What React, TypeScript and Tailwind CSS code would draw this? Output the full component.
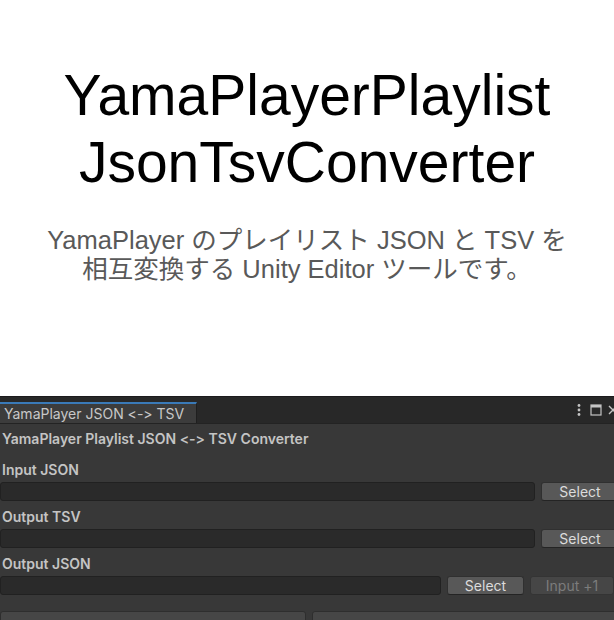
export default function App() {
  const field = "h-[19px] rounded-[3px] bg-[#2a2a2a] border border-[#212121]";
  const btn =
    "h-[19px] rounded-[3px] bg-[#585858] border border-[#303030] border-b-[#242424] flex items-center justify-center text-[#dcdcdc] text-[14px]";
  const label = "h-[20px] flex items-center pl-[2px] font-semibold text-[14px] text-[#c4c4c4]";
  return (
    <div className="w-[614px] h-[620px] overflow-hidden bg-white">
      <div className="h-[396px] flex flex-col items-center pt-[62px] font-['Liberation_Sans','Noto_Sans_CJK_JP',sans-serif]">
        <h1 className="text-[57px] leading-[67px] text-black text-center whitespace-nowrap">
          YamaPlayerPlaylist
          <br />
          JsonTsvConverter
        </h1>
        <p className="mt-[30px] text-[25.5px] leading-[29px] text-[#595959] text-center whitespace-nowrap">
          YamaPlayer のプレイリスト JSON と TSV を
          <br />
          相互変換する Unity Editor ツールです。
        </p>
      </div>
      <div className="h-[224px] w-[624px] bg-[#383838] border-t border-[#1b1a1c] font-['Inter',sans-serif] text-[#c4c4c4] [font-feature-settings:'calt'_0,'liga'_0]">
        <div className="h-[27px] bg-[#282828] flex items-end border-b border-[#232323]">
          <div className="w-[197px] h-[21px] bg-[#3c3c3c] border-t-2 border-[#3a7ab8] border-r border-r-[#1f1f1f] pl-[4px] flex items-center text-[14px] text-[#c8c8c8] whitespace-nowrap">
            YamaPlayer JSON &lt;-&gt; TSV
          </div>
          <div className="ml-auto h-[26px] flex items-center gap-[6px] pr-[6px]">
            <svg width="6" height="14" viewBox="0 0 6 14">
              <circle cx="3" cy="2.5" r="1.4" fill="#c4c4c4" />
              <circle cx="3" cy="7" r="1.4" fill="#c4c4c4" />
              <circle cx="3" cy="11.5" r="1.4" fill="#c4c4c4" />
            </svg>
            <svg width="12" height="12" viewBox="0 0 12 12" className="ml-[2px]">
              <rect x="1" y="1" width="10" height="10" fill="none" stroke="#c4c4c4" strokeWidth="1.2" />
              <rect x="1" y="1" width="10" height="2.5" fill="#c4c4c4" />
            </svg>
            <svg width="10" height="10" viewBox="0 0 10 10">
              <path d="M1 1 L9 9 M9 1 L1 9" stroke="#c4c4c4" strokeWidth="1.4" />
            </svg>
          </div>
        </div>
        <div className="flex flex-col">
          <div className="mt-[4px] h-[20px] flex items-center pl-[2px] font-semibold text-[14px] whitespace-nowrap">
            YamaPlayer Playlist JSON &lt;-&gt; TSV Converter
          </div>
          <div className={`mt-[11px] ${label}`}>Input JSON</div>
          <div className="mt-[3px] flex gap-[6px]">
            <div className={`w-[535px] ${field}`} />
            <div className={`w-[78px] ${btn}`}>Select</div>
          </div>
          <div className={`mt-[5px] ${label}`}>Output TSV</div>
          <div className="mt-[3px] flex gap-[6px]">
            <div className={`w-[535px] ${field}`} />
            <div className={`w-[78px] ${btn}`}>Select</div>
          </div>
          <div className={`mt-[5px] ${label}`}>Output JSON</div>
          <div className="mt-[3px] flex gap-[6px]">
            <div className={`w-[441px] ${field}`} />
            <div className={`w-[77px] ${btn}`}>Select</div>
            <div className="w-[84px] h-[19px] rounded-[3px] bg-[#464646] border border-[#343434] flex items-center justify-center text-[#7c7c7c] text-[14px]">
              Input +1
            </div>
          </div>
          <div className="mt-[16px] flex gap-[6px]">
            <div className="w-[306px] h-[30px] rounded-[3px] bg-[#464646] border border-[#2e2e2e]" />
            <div className="w-[306px] h-[30px] rounded-[3px] bg-[#464646] border border-[#2e2e2e]" />
          </div>
        </div>
      </div>
    </div>
  );
}
